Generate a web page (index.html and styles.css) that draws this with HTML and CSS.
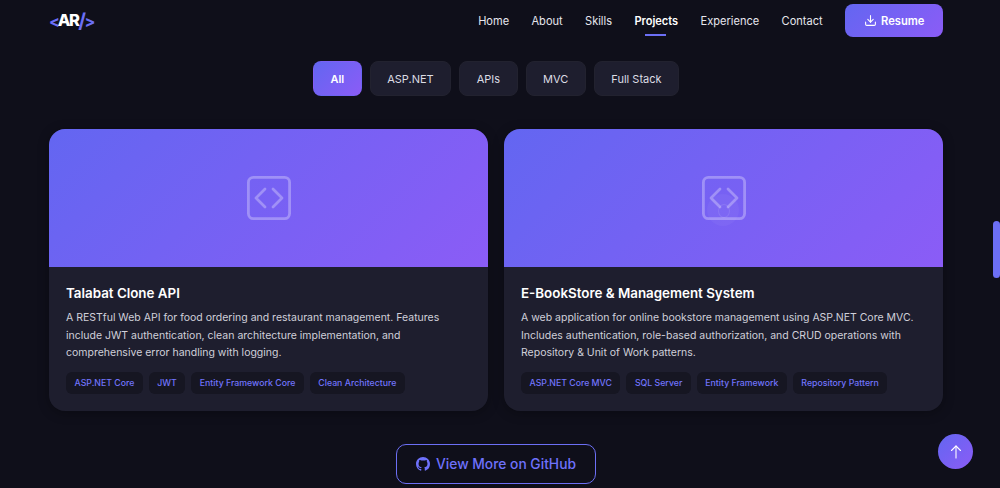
FILE: index.html
```html
<!DOCTYPE html>
<html lang="en">
<head>
<meta charset="utf-8">
<title>Projects</title>
<link rel="stylesheet" href="styles.css">
</head>
<body>
<header class="nav">
  <a class="logo"><span class="accent">&lt;</span><span class="initials">AR</span><span class="accent slash">/</span><span class="accent">&gt;</span></a>
  <nav class="links">
    <a class="link">Home</a>
    <a class="link">About</a>
    <a class="link">Skills</a>
    <a class="link active">Projects</a>
    <a class="link">Experience</a>
    <a class="link">Contact</a>
    <a class="resume">
      <svg class="resume-icon" viewBox="0 0 24 24" fill="none" stroke="currentColor" stroke-width="2" stroke-linecap="round" stroke-linejoin="round"><path d="M21 15v4a2 2 0 0 1-2 2H5a2 2 0 0 1-2-2v-4"/><path d="M7 10l5 5 5-5"/><path d="M12 15V3"/></svg>
      Resume
    </a>
  </nav>
</header>
<main class="main">
  <div class="filters">
    <button class="filter on">All</button>
    <button class="filter">ASP.NET</button>
    <button class="filter">APIs</button>
    <button class="filter">MVC</button>
    <button class="filter">Full Stack</button>
  </div>
  <div class="grid">
    <article class="card">
      <div class="thumb">
        <svg class="code-icon" viewBox="0 0 44 44" fill="none" stroke="currentColor" stroke-width="2.8" stroke-linecap="round" stroke-linejoin="round"><rect x="1.400" y="1.400" width="41.200" height="41.200" rx="5"/><path d="M18 13L9 22l9 9"/><path d="M26 13l9 9-9 9"/></svg>
      </div>
      <div class="body">
        <h3 class="title">Talabat Clone API</h3>
        <p class="desc">A RESTful Web API for food ordering and restaurant management. Features include JWT authentication, clean architecture implementation, and comprehensive error handling with logging.</p>
        <div class="tags">
          <span class="tag">ASP.NET Core</span>
          <span class="tag">JWT</span>
          <span class="tag">Entity Framework Core</span>
          <span class="tag">Clean Architecture</span>
        </div>
      </div>
    </article>
    <article class="card">
      <div class="thumb">
        <svg class="code-icon" viewBox="0 0 44 44" fill="none" stroke="currentColor" stroke-width="2.8" stroke-linecap="round" stroke-linejoin="round"><rect x="1.400" y="1.400" width="41.200" height="41.200" rx="5"/><path d="M18 13L9 22l9 9"/><path d="M26 13l9 9-9 9"/></svg>
        <span class="glow"></span>
      </div>
      <div class="body">
        <h3 class="title">E-BookStore &amp; Management System</h3>
        <p class="desc">A web application for online bookstore management using ASP.NET Core MVC. Includes authentication, role-based authorization, and CRUD operations with Repository &amp; Unit of Work patterns.</p>
        <div class="tags">
          <span class="tag">ASP.NET Core MVC</span>
          <span class="tag">SQL Server</span>
          <span class="tag">Entity Framework</span>
          <span class="tag">Repository Pattern</span>
        </div>
      </div>
    </article>
  </div>
  <div class="more-row">
    <a class="more">
      <svg class="gh" viewBox="0 0 16 16" fill="currentColor"><path d="M8 0C3.580 0 0 3.580 0 8c0 3.540 2.290 6.530 5.470 7.590.4.070.55-.17.55-.38 0-.19-.01-.82-.01-1.490-2.010.37-2.530-.49-2.690-.94-.09-.23-.48-.94-.82-1.130-.28-.15-.68-.52-.01-.53.63-.01 1.080.58 1.230.82.720 1.210 1.870.87 2.330.66.070-.52.280-.87.510-1.070-1.780-.2-3.640-.89-3.640-3.950 0-.87.310-1.590.82-2.150-.08-.2-.36-1.020.08-2.120 0 0 .67-.21 2.200.82.640-.18 1.320-.27 2-.27s1.360.09 2 .27c1.530-1.040 2.200-.82 2.200-.82.440 1.100.160 1.920.080 2.120.51.560.82 1.270.82 2.150 0 3.070-1.870 3.750-3.650 3.950.29.250.54.730.54 1.480 0 1.070-.01 1.930-.01 2.200 0 .21.150.46.55.38A8.010 8.010 0 0 0 16 8c0-4.420-3.580-8-8-8z"/></svg>
      View More on GitHub
    </a>
  </div>
</main>
<div class="scroll-thumb"></div>
<a class="to-top">
  <svg class="to-top-icon" viewBox="0 0 16 16" fill="none" stroke="currentColor" stroke-width="1.100" stroke-linecap="round" stroke-linejoin="round"><path d="M8 14V2"/><path d="M3.500 6.500L8 2l4.500 4.500"/></svg>
</a>
</body>
</html>
```
FILE: styles.css
```css
* { box-sizing: border-box; }
html, body { margin: 0; height: 100%; }
body {
  background: #0f0f1a;
  color: #fff;
  font-family: Inter, "Liberation Sans", sans-serif;
  overflow: hidden;
  position: relative;
}
.nav {
  display: flex;
  justify-content: space-between;
  align-items: center;
  height: 41px;
  padding: 0 57px 0 49px;
}
.logo {
  display: flex;
  align-items: center;
  font-size: 16px;
  font-weight: 700;
  line-height: 1;
}
.initials { margin-left: -2px; font-size: 16.500px; font-weight: 800; letter-spacing: -1.600px; }
.accent { color: #6c6ff5; font-weight: 700; }
.slash { font-size: 20px; margin-right: -1.500px; }
.links { display: flex; align-items: center; gap: 22.400px; }
.link {
  position: relative;
  font-size: 11.050px;
  font-weight: 400;
  color: #e6e6ee;
}
.link.active { color: #fff; font-weight: 600; }
.link.active::after {
  content: "";
  position: absolute;
  left: 11px;
  bottom: -8px;
  width: 21px;
  height: 2px;
  background: #6c6ff5;
}
.resume {
  display: flex;
  align-items: center;
  justify-content: center;
  gap: 4.500px;
  width: 98px;
  height: 33px;
  border-radius: 8px;
  background: linear-gradient(135deg, #6366f1, #8b5cf6);
  font-size: 11.200px;
  font-weight: 600;
  color: #fff;
}
.resume-icon { width: 13px; height: 13px; }
.main { padding: 0 57px 0 49px; }
.filters {
  display: flex;
  justify-content: center;
  gap: 8px;
  margin-top: 20px;
}
.filter {
  height: 35px;
  padding: 0 16.500px;
  border: 1px solid #22222f;
  border-radius: 8px;
  background: #1e1e2e;
  color: #dcdce4;
  font-family: inherit;
  font-size: 11px;
  font-weight: 400;
}
.filter.on {
  background: linear-gradient(135deg, #6366f1, #8b5cf6);
  border-color: transparent;
  color: #fff;
  font-weight: 600;
}
.grid {
  display: grid;
  grid-template-columns: 1fr 1fr;
  gap: 16px;
  margin-top: 33px;
}
.card {
  height: 282px;
  background: #1e1e2e;
  border-radius: 16px;
  overflow: hidden;
  box-shadow: 0 2px 12px rgba(0, 0, 0, 0.3);
}
.thumb {
  position: relative;
  height: 138px;
  display: flex;
  align-items: center;
  justify-content: center;
  background: linear-gradient(135deg, #6366f1, #8b5cf6);
}
.code-icon { width: 44px; height: 44px; color: rgba(255, 255, 255, 0.3); }
.glow {
  position: absolute;
  left: 203px;
  top: 65px;
  width: 32px;
  height: 32px;
  border-radius: 50%;
  background: rgba(255, 255, 255, 0.04);
}
.glow::after {
  content: "";
  position: absolute;
  left: 11px;
  top: 10px;
  width: 10px;
  height: 12px;
  border: 1.500px solid rgba(255, 255, 255, 0.1);
  border-radius: 50%;
}
.body { padding: 16px 17px; }
.title {
  margin: 0 0 6px;
  font-size: 13.360px;
  font-weight: 600;
  line-height: 20px;
  color: #fff;
}
.desc {
  margin: 0 0 10px;
  font-size: 10.500px;
  line-height: 17.600px;
  color: #d0d0da;
}
.tags { display: flex; flex-wrap: wrap; gap: 6px; }
.tag {
  padding: 0 8.500px;
  height: 22px;
  line-height: 22px;
  border-radius: 6px;
  background: #161622;
  color: #7174fc;
  font-size: 8.760px;
  font-weight: 500;
}
.more-row { display: flex; justify-content: center; margin-top: 33px; }
.more {
  display: flex;
  align-items: center;
  gap: 6px;
  height: 40px;
  padding: 0 19.500px;
  border: 1px solid #6c6ff5;
  border-radius: 10px;
  color: #6e71fb;
  font-size: 13.800px;
  font-weight: 500;
}
.gh { width: 14px; height: 14px; }
.scroll-thumb {
  position: absolute;
  right: 0;
  top: 221px;
  width: 7px;
  height: 57px;
  border-radius: 4px;
  background: #6c6ff5;
}
.to-top {
  position: absolute;
  left: 938px;
  top: 434px;
  width: 35px;
  height: 35px;
  border-radius: 50%;
  display: flex;
  align-items: center;
  justify-content: center;
  background: linear-gradient(135deg, #6366f1, #8b5cf6);
  color: #fff;
}
.to-top-icon { width: 16px; height: 16px; }
```
